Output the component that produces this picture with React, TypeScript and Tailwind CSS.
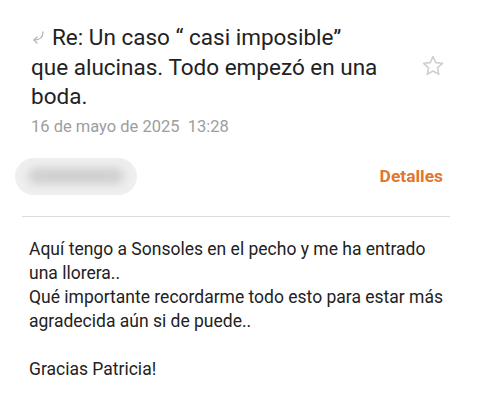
import React from 'react';

function ReplyArrow() {
  return (
    <svg width="14" height="14" viewBox="0 0 14 14" fill="none" stroke="#b5b5b5" strokeWidth="1.3" strokeLinecap="round" strokeLinejoin="round">
      <path d="M12 2 C12 7 10 10 3 10" />
      <path d="M6 7 L3 10 L6 13" />
    </svg>
  );
}

function StarOutline() {
  return (
    <svg width="24" height="24" viewBox="0 0 24 24" fill="none" stroke="#cfcfcf" strokeWidth="1.6" strokeLinejoin="round">
      <path d="M12 2.5 L14.8 8.6 L21.4 9.3 L16.4 13.8 L17.8 20.4 L12 17 L6.2 20.4 L7.6 13.8 L2.6 9.3 L9.2 8.6 Z" />
    </svg>
  );
}

export default function App() {
  return (
    <div className="w-[500px] h-[400px] bg-white overflow-hidden" style={{ fontFamily: 'Roboto, "Noto Sans", sans-serif' }}>
      <div className="pl-[31px] pr-[55px] pt-[23px] relative">
        <h1 className="text-[22.5px] leading-[29.5px] text-[#222]">
          <span className="inline-block mr-[7px] align-[1px]">
            <ReplyArrow />
          </span>
          Re: Un caso “ casi imposible”
          <br />
          que alucinas. Todo empezó en una
          <br />
          boda.
        </h1>
        <div className="absolute right-[55px] top-[54px]">
          <StarOutline />
        </div>
        <p className="mt-[5px] text-[16.5px] leading-[20px] text-[#9d9d9d] whitespace-pre">16 de mayo de 2025  13:28</p>
      </div>

      <div className="flex items-center justify-between pl-[15px] pr-[57px] mt-[21px]">
        <div className="w-[122px] h-[37px] rounded-full bg-[#efefef] flex items-center justify-center overflow-hidden">
          <div className="w-[96px] h-[16px] rounded-full bg-[#cfcfcf] blur-[5px]" />
        </div>
        <span className="text-[17.4px] font-bold text-[#e2762f]">Detalles</span>
      </div>

      <div className="ml-[22px] mr-[50px] mt-[21px] h-px bg-[#dcdcdc]" />

      <div className="pl-[29px] pr-[10px] pt-[20px] text-[17.5px] leading-[24px] text-[#222]">
        <p>Aquí tengo a Sonsoles en el pecho y me ha entrado</p>
        <p>una llorera..</p>
        <p>Qué importante recordarme todo esto para estar más</p>
        <p>agradecida aún si de puede..</p>
        <p className="h-[24px]" />
        <p>Gracias Patricia!</p>
      </div>
    </div>
  );
}
